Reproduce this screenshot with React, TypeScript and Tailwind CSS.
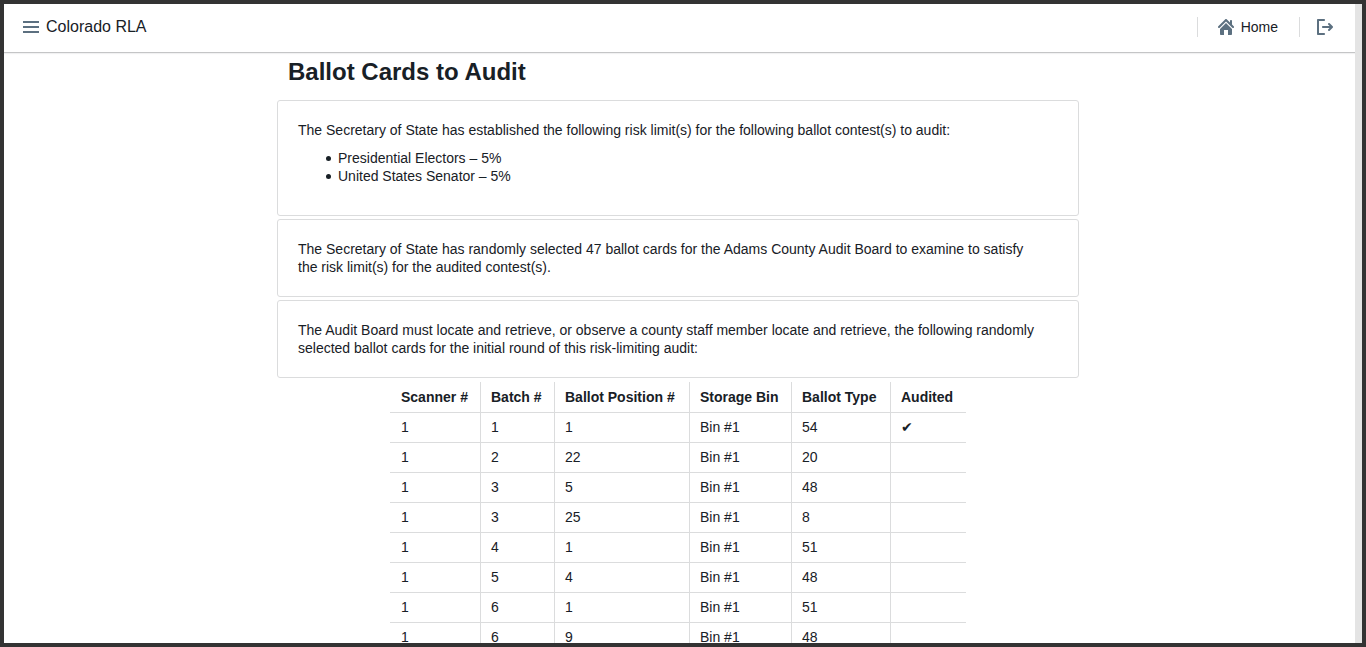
import type { ReactNode } from "react";

type BallotCard = {
  scanner: number;
  batch: number;
  position: number;
  bin: string;
  type: number;
  audited: boolean;
};

const contests = ["Presidential Electors – 5%", "United States Senator – 5%"];

const columns = [
  { label: "Scanner #", style: "w-[90px] pl-[11px]" },
  { label: "Batch #", style: "w-[74px] border-l pl-2.5" },
  { label: "Ballot Position #", style: "w-[135px] border-l pl-2.5" },
  { label: "Storage Bin", style: "w-[102px] border-l pl-2.5" },
  { label: "Ballot Type", style: "w-[99px] border-l pl-2.5" },
  { label: "Audited", style: "w-[76px] border-l pl-2.5" },
];

const ballotCards: BallotCard[] = [
  { scanner: 1, batch: 1, position: 1, bin: "Bin #1", type: 54, audited: true },
  { scanner: 1, batch: 2, position: 22, bin: "Bin #1", type: 20, audited: false },
  { scanner: 1, batch: 3, position: 5, bin: "Bin #1", type: 48, audited: false },
  { scanner: 1, batch: 3, position: 25, bin: "Bin #1", type: 8, audited: false },
  { scanner: 1, batch: 4, position: 1, bin: "Bin #1", type: 51, audited: false },
  { scanner: 1, batch: 5, position: 4, bin: "Bin #1", type: 48, audited: false },
  { scanner: 1, batch: 6, position: 1, bin: "Bin #1", type: 51, audited: false },
  { scanner: 1, batch: 6, position: 9, bin: "Bin #1", type: 48, audited: false },
];

function MenuIcon() {
  return (
    <svg className="size-4" viewBox="0 0 16 16" fill="currentColor" aria-hidden="true">
      <path d="M0 2h16v2H0zM0 7h16v2H0zM0 12h16v2H0z" />
    </svg>
  );
}

function HomeIcon() {
  return (
    <svg className="size-4" viewBox="0 0 16 16" fill="currentColor" aria-hidden="true">
      <path d="M2 10v5c0 .55.45 1 1 1h3v-5h4v5h3c.55 0 1-.45 1-1v-5L8 4l-6 6zm13.71-2.71L14 5.59V2c0-.55-.45-1-1-1s-1 .45-1 1v1.59L8.71.29C8.53.11 8.28 0 8 0s-.53.11-.71.29l-7 7a1.003 1.003 0 001.42 1.42L8 2.41l6.29 6.29c.18.19.43.3.71.3a1.003 1.003 0 00.71-1.71z" />
    </svg>
  );
}

function LogOutIcon() {
  return (
    <svg className="size-4" viewBox="0 0 16 16" fill="currentColor" aria-hidden="true">
      <path d="M7 14H2V2h5c.55 0 1-.45 1-1s-.45-1-1-1H1C.45 0 0 .45 0 1v14c0 .55.45 1 1 1h6c.55 0 1-.45 1-1s-.45-1-1-1zm8.71-6.71l-3-3a1.003 1.003 0 00-1.42 1.42L12.59 7H6c-.55 0-1 .45-1 1s.45 1 1 1h6.59l-1.29 1.29c-.19.18-.3.43-.3.71a1.003 1.003 0 001.71.71l3-3c.18-.18.29-.43.29-.71 0-.28-.11-.53-.29-.71z" />
    </svg>
  );
}

function Navbar() {
  return (
    <header className="flex h-[49px] shrink-0 items-center justify-between border-b border-[#c4c5c6] pr-[22px] pb-0.5 pl-[19px] shadow-[0_1px_1px_rgba(16,22,26,0.06)]">
      <div className="flex items-center gap-[7px]">
        <button type="button" aria-label="Menu" className="text-[#5c7080]">
          <MenuIcon />
        </button>
        <span className="text-base leading-5">Colorado RLA</span>
      </div>
      <nav className="flex h-5 items-center">
        <a
          href="#home"
          className="flex h-5 items-center gap-[7px] border-l border-[#dbdcdd] pr-[21px] pl-5"
        >
          <span className="text-[#5c7080]">
            <HomeIcon />
          </span>
          Home
        </a>
        <button
          type="button"
          aria-label="Log out"
          className="flex h-5 items-center border-l border-[#dbdcdd] pl-[17px] text-[#5c7080]"
        >
          <LogOutIcon />
        </button>
      </nav>
    </header>
  );
}

function Card({ children }: { children: ReactNode }) {
  return (
    <section className="rounded-[3px] border border-[#dbdcdd] py-5 pr-8 pl-5">{children}</section>
  );
}

function Cell({ children }: { children: ReactNode }) {
  return <td className="border-t border-l border-[#dbdcdd] pt-[5px] pb-1.5 pl-2.5">{children}</td>;
}

function BallotTable() {
  return (
    <table className="mx-auto mt-px table-fixed border-separate border-spacing-0 text-left">
      <thead>
        <tr>
          {columns.map((column) => (
            <th
              key={column.label}
              scope="col"
              className={`${column.style} border-[#dbdcdd] py-1.5 font-bold whitespace-nowrap`}
            >
              {column.label}
            </th>
          ))}
        </tr>
      </thead>
      <tbody>
        {ballotCards.map((card) => (
          <tr key={`${card.batch}-${card.position}`}>
            <td className="border-t border-[#dbdcdd] pt-[5px] pb-1.5 pl-[11px]">{card.scanner}</td>
            <Cell>{card.batch}</Cell>
            <Cell>{card.position}</Cell>
            <Cell>{card.bin}</Cell>
            <Cell>{card.type}</Cell>
            <Cell>{card.audited ? "✔" : ""}</Cell>
          </tr>
        ))}
      </tbody>
    </table>
  );
}

export default function App() {
  return (
    <div className="flex h-screen overflow-hidden border-4 border-[#333333] bg-white font-['Liberation_Sans',Arial,sans-serif] text-sm leading-[18px] text-[#182026]">
      <div className="flex min-w-0 flex-1 flex-col">
        <Navbar />
        <div className="min-h-0 flex-1 overflow-hidden pr-[3px]">
          <main className="mx-auto max-w-[802px]">
            <h1 className="px-[11px] pt-1 pb-[13px] text-2xl leading-[30px] font-bold">
              Ballot Cards to Audit
            </h1>
            <div className="flex flex-col gap-[3px]">
              <Card>
                <p>
                  The Secretary of State has established the following risk limit(s) for the
                  following ballot contest(s) to audit:
                </p>
                <ul className="my-2.5 pl-7">
                  {contests.map((contest) => (
                    <li
                      key={contest}
                      className="flex items-center gap-[7px] before:size-[5px] before:rounded-full before:bg-[#182026]"
                    >
                      {contest}
                    </li>
                  ))}
                </ul>
              </Card>
              <Card>
                <p>
                  The Secretary of State has randomly selected 47 ballot cards for the Adams County
                  Audit Board to examine to satisfy the risk limit(s) for the audited contest(s).
                </p>
              </Card>
              <Card>
                <p>
                  The Audit Board must locate and retrieve, or observe a county staff member locate
                  and retrieve, the following randomly selected ballot cards for the initial round
                  of this risk-limiting audit:
                </p>
              </Card>
              <BallotTable />
            </div>
          </main>
        </div>
      </div>
      <div className="w-[7px] shrink-0 bg-[#e4e4e4]" />
    </div>
  );
}
